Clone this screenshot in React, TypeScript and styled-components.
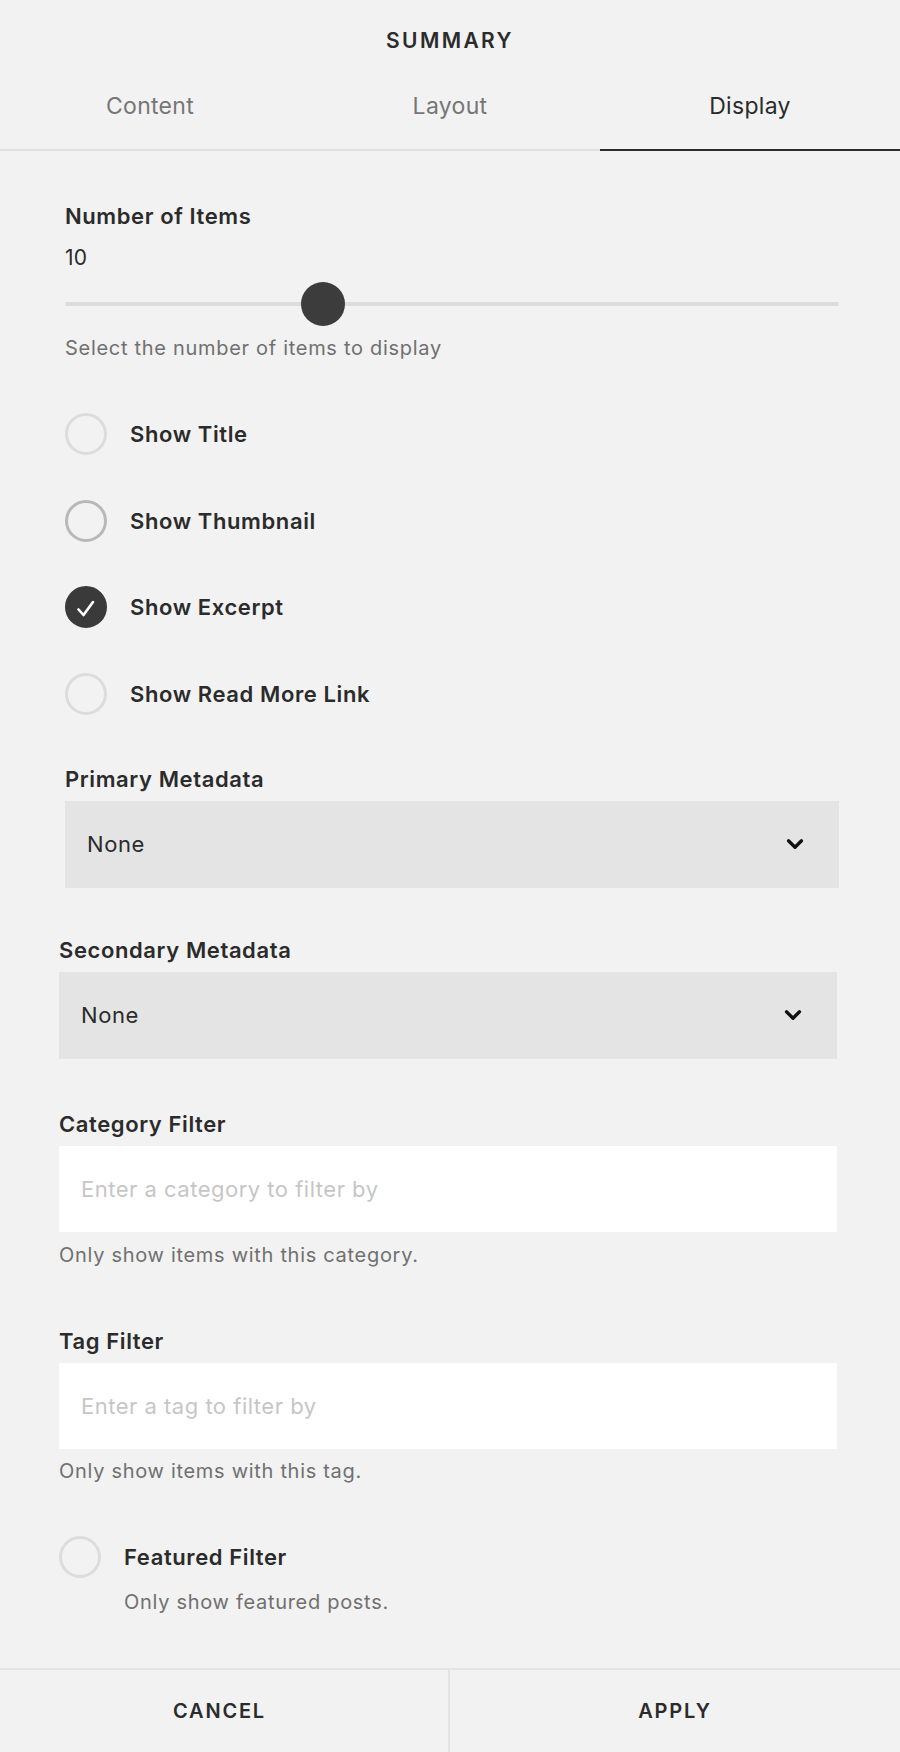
import React from 'react'
import styled, { createGlobalStyle } from 'styled-components'

const GlobalStyle = createGlobalStyle`
  * { box-sizing: border-box; }
  html, body { margin: 0; padding: 0; background: #f2f2f2; }
  body {
    font-family: Inter, "Liberation Sans", Arial, sans-serif;
    color: #2b2b2b;
    -webkit-font-smoothing: antialiased;
  }
`

const Panel = styled.div`
  display: flex;
  flex-direction: column;
  min-height: 100vh;
  background: #f2f2f2;
`

const Title = styled.h1`
  margin: 0;
  padding: 29px 0 12px;
  font-size: 21px;
  line-height: 24px;
  font-weight: 600;
  letter-spacing: 2.4px;
  text-align: center;
  color: #2b2b2b;
`

const TabBar = styled.nav`
  display: grid;
  grid-template-columns: repeat(3, 1fr);
  border-bottom: 2px solid #e0e0e0;
`

const Tab = styled.div<{ $active?: boolean }>`
  padding: 28px 0 30px;
  margin-bottom: -2px;
  font-size: 23px;
  line-height: 26px;
  letter-spacing: 0.3px;
  text-align: center;
  color: ${(p) => (p.$active ? '#2b2b2b' : '#767676')};
  border-bottom: 2px solid ${(p) => (p.$active ? '#2b2b2b' : 'transparent')};
`

const Body = styled.main`
  flex: 1;
  padding-bottom: 54px;
`

const Section = styled.section<{ $left: number; $right: number }>`
  display: flex;
  flex-direction: column;
  padding: 0 ${(p) => p.$right}px 0 ${(p) => p.$left}px;
`

const Label = styled.div<{ $top: number }>`
  margin-top: ${(p) => p.$top}px;
  font-size: 22px;
  line-height: 24px;
  font-weight: 600;
  letter-spacing: 0.6px;
  color: #2b2b2b;
`

const Value = styled.div`
  margin-top: 18px;
  font-size: 21px;
  line-height: 24px;
  letter-spacing: 0.3px;
  color: #2b2b2b;
`

const Slider = styled.div`
  position: relative;
  height: 44px;
  margin-top: 12px;
  display: flex;
  align-items: center;
`

const Track = styled.div`
  width: 100%;
  height: 4px;
  border-radius: 2px;
  background: #dcdcdc;
`

const Thumb = styled.div`
  position: absolute;
  top: 0;
  width: 44px;
  height: 44px;
  margin-left: -22px;
  border-radius: 50%;
  background: #3c3c3c;
`

const Help = styled.div<{ $top?: number }>`
  margin-top: ${(p) => p.$top ?? 11}px;
  font-size: 20px;
  line-height: 22px;
  letter-spacing: 0.7px;
  color: #707070;
`

const Checklist = styled.div`
  display: flex;
  flex-direction: column;
  gap: 44.5px;
  margin-top: 54px;
`

const CheckRow = styled.label`
  display: flex;
  align-items: flex-start;
  gap: 23px;
`

const Circle = styled.span<{ $state: 'off' | 'hover' | 'on' }>`
  flex: none;
  width: 42px;
  height: 42px;
  border-radius: 50%;
  display: flex;
  align-items: center;
  justify-content: center;
  border: 3px solid
    ${(p) => (p.$state === 'on' ? '#3a3a3a' : p.$state === 'hover' ? '#b8b8b8' : '#dcdcdc')};
  background: ${(p) => (p.$state === 'on' ? '#3a3a3a' : 'transparent')};
`

const CheckText = styled.div`
  display: flex;
  flex-direction: column;
`

const CheckLabel = styled.span`
  font-size: 22px;
  line-height: 42px;
  font-weight: 600;
  letter-spacing: 0.6px;
  color: #2b2b2b;
`

const Select = styled.div`
  display: flex;
  align-items: center;
  justify-content: space-between;
  height: 87px;
  margin-top: 10px;
  padding: 0 35px 0 22px;
  background: #e4e4e4;
  font-size: 22px;
  letter-spacing: 0.6px;
  color: #2b2b2b;
`

const Field = styled.input`
  display: block;
  width: 100%;
  height: 86px;
  margin-top: 10px;
  padding: 0 22px;
  border: 0;
  outline: none;
  background: #ffffff;
  font-family: inherit;
  font-size: 22px;
  letter-spacing: 0.5px;
  color: #2b2b2b;
  &::placeholder {
    color: #c6c6c6;
  }
`

const Footer = styled.footer`
  display: grid;
  grid-template-columns: 448px 1fr;
  height: 84px;
  border-top: 2px solid #e4e4e4;
`

const FooterButton = styled.button<{ $divider?: boolean }>`
  border: 0;
  border-left: ${(p) => (p.$divider ? '2px solid #e4e4e4' : '0')};
  padding: 0 ${(p) => (p.$divider ? '0' : '9px')} 0 0;
  background: transparent;
  font-family: inherit;
  font-size: 20px;
  font-weight: 600;
  letter-spacing: 1.8px;
  color: #2b2b2b;
  cursor: pointer;
`

const Chevron = () => (
  <svg width="18" height="12" viewBox="0 0 18 12" fill="none">
    <polyline points="2.5,2.8 9,9.2 15.5,2.8" stroke="#111" strokeWidth="3.3" strokeLinecap="round" strokeLinejoin="round" />
  </svg>
)

const Check = () => (
  <svg width="22" height="22" viewBox="0 0 22 22" fill="none" style={{ marginTop: 3 }}>
    <polyline points="3.5,11.5 8.5,17 18,4" stroke="#fff" strokeWidth="2.6" strokeLinecap="round" strokeLinejoin="round" />
  </svg>
)

const options: { label: string; state: 'off' | 'hover' | 'on' }[] = [
  { label: 'Show Title', state: 'off' },
  { label: 'Show Thumbnail', state: 'hover' },
  { label: 'Show Excerpt', state: 'on' },
  { label: 'Show Read More Link', state: 'off' },
]

const count = { value: 10, min: 1, max: 28 }

export default function App() {
  const pct = ((count.value - count.min) / (count.max - count.min)) * 100

  return (
    <Panel>
      <GlobalStyle />
      <Title>SUMMARY</Title>
      <TabBar>
        <Tab>Content</Tab>
        <Tab>Layout</Tab>
        <Tab $active>Display</Tab>
      </TabBar>

      <Body>
        <Section $left={65} $right={61}>
          <Label $top={53}>Number of Items</Label>
          <Value>{count.value}</Value>
          <Slider>
            <Track />
            <Thumb style={{ left: `${pct}%` }} />
          </Slider>
          <Help>Select the number of items to display</Help>

          <Checklist>
            {options.map((o) => (
              <CheckRow key={o.label}>
                <Circle $state={o.state}>{o.state === 'on' && <Check />}</Circle>
                <CheckLabel>{o.label}</CheckLabel>
              </CheckRow>
            ))}
          </Checklist>

          <Label $top={52}>Primary Metadata</Label>
          <Select>
            <span>None</span>
            <Chevron />
          </Select>
        </Section>

        <Section $left={59} $right={63}>
          <Label $top={50}>Secondary Metadata</Label>
          <Select>
            <span>None</span>
            <Chevron />
          </Select>

          <Label $top={53}>Category Filter</Label>
          <Field placeholder="Enter a category to filter by" />
          <Help $top={12}>Only show items with this category.</Help>

          <Label $top={63}>Tag Filter</Label>
          <Field placeholder="Enter a tag to filter by" />
          <Help $top={11}>Only show items with this tag.</Help>

          <Checklist>
            <CheckRow>
              <Circle $state="off" />
              <CheckText>
                <CheckLabel>Featured Filter</CheckLabel>
                <Help $top={13}>Only show featured posts.</Help>
              </CheckText>
            </CheckRow>
          </Checklist>
        </Section>
      </Body>

      <Footer>
        <FooterButton>CANCEL</FooterButton>
        <FooterButton $divider>APPLY</FooterButton>
      </Footer>
    </Panel>
  )
}
